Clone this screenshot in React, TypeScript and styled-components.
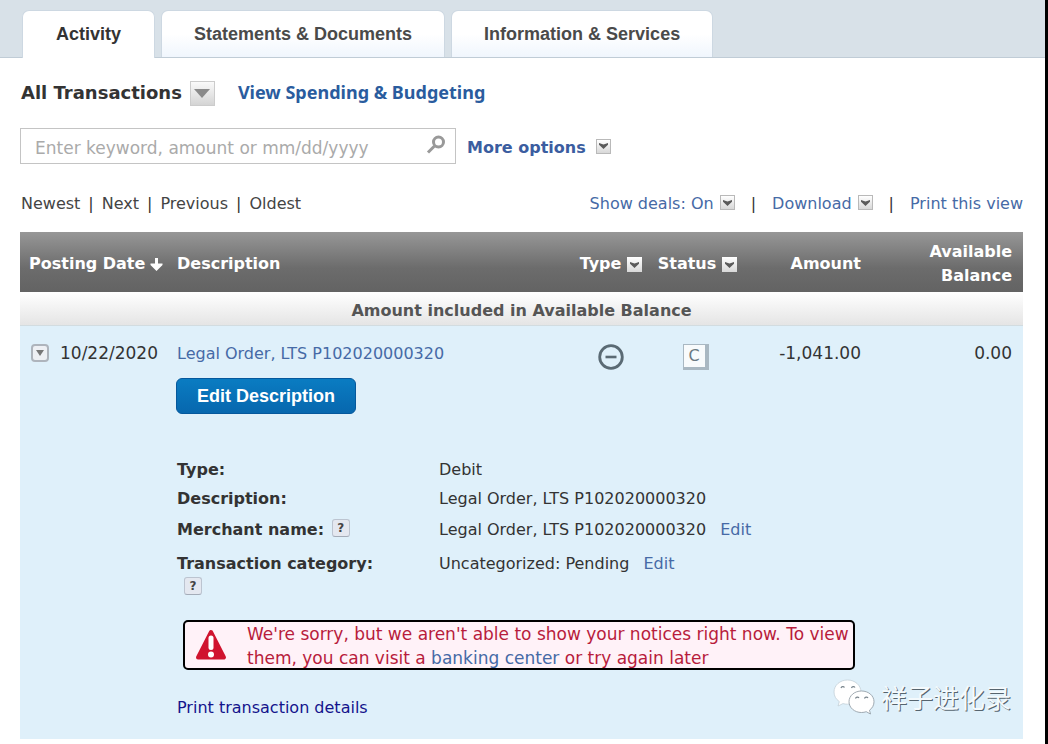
import React from "react";
import styled, { createGlobalStyle } from "styled-components";

const GlobalStyle = createGlobalStyle`
  *, *::before, *::after { box-sizing: border-box; }
  body {
    margin: 0;
    background: #fff;
    color: #333;
    font-family: "DejaVu Sans", Verdana, sans-serif;
    font-size: 16px;
    line-height: 24px;
  }
  a { color: #466aa6; text-decoration: none; }
  button, input { font: inherit; }
`;

const Page = styled.div`
  min-height: 100vh;
  border-right: 3px solid #000;
`;

const TabBar = styled.nav`
  display: flex;
  align-items: flex-end;
  gap: 6px;
  height: 58px;
  padding-left: 22px;
  background: #d8e1e8;
  border-bottom: 1px solid #c0ccd6;
`;

const Tab = styled.a<{ $active?: boolean }>`
  height: ${(p) => (p.$active ? 48 : 47)}px;
  margin-bottom: ${(p) => (p.$active ? -1 : 0)}px;
  padding: 0 ${(p) => (p.$active ? 33 : 32)}px;
  border: 1px solid #cdd8e2;
  border-bottom: 0;
  border-radius: 7px 7px 0 0;
  background: ${(p) => (p.$active ? "#fff" : "linear-gradient(#fff 50%, #f0f6fd)")};
  color: ${(p) => (p.$active ? "#333" : "#4a4a4a")};
  font: bold 18px/46px "Liberation Sans", Arial, sans-serif;
  white-space: nowrap;
`;

const Main = styled.main`
  padding: 22px 22px 5px 20px;
`;

const TitleRow = styled.div`
  display: flex;
  align-items: center;
  height: 26px;
  padding-left: 1px;
`;

const Title = styled.h1`
  margin: 0 8px 0 0;
  font-size: 18px;
  line-height: 24px;
`;

const BigDrop = styled.button`
  display: flex;
  align-items: center;
  justify-content: center;
  width: 25px;
  height: 25px;
  padding: 0;
  border: 1px solid #ccc;
  background: linear-gradient(#fafafa, #d4d4d4);
`;

const BudgetLink = styled.a`
  margin-left: 23px;
  padding-bottom: 2px;
  color: #2a5c9e;
  font: bold 18px/24px "Noto Sans", sans-serif;
`;

const SearchRow = styled.form`
  display: flex;
  align-items: center;
  gap: 11px;
  margin-top: 22px;
`;

const SearchBox = styled.div`
  display: flex;
  align-items: center;
  width: 436px;
  height: 36px;
  padding: 0 9px 0 14px;
  border: 1px solid #c4c4c4;
`;

const SearchInput = styled.input`
  flex: 1;
  min-width: 0;
  padding: 4px 0 0;
  border: 0;
  outline: 0;
  background: none;
  color: #333;
  font-size: 17px;
  &::placeholder { color: #aaa; opacity: 1; }
`;

const IconButton = styled.button`
  display: flex;
  padding: 0 0 2px;
  border: 0;
  background: none;
`;

const MoreOptions = styled.a`
  display: flex;
  align-items: center;
  gap: 10px;
  padding-top: 3px;
  color: #3b5da0;
  font-weight: bold;
`;

const ControlRow = styled.div`
  display: flex;
  justify-content: space-between;
  margin: 28px 0 16px;
  padding: 0 0 0 1px;
`;

const Pager = styled.nav`
  display: flex;
  gap: 8px;
  a { color: #444; }
`;

const Tools = styled.div`
  display: flex;
  gap: 16px;
  a { display: flex; align-items: center; gap: 6px; }
`;

const SmallDrop = styled.span`
  display: inline-flex;
  align-items: center;
  justify-content: center;
  width: 15px;
  height: 15px;
  margin-bottom: 3px;
  border: 1px solid #b9b9b9;
  background: linear-gradient(#fff, #d8d8d8);
`;

const HeaderDrop = styled.button`
  display: inline-flex;
  align-items: center;
  justify-content: center;
  width: 15px;
  height: 15px;
  margin-left: 6px;
  padding: 0;
  border: 0;
  background: linear-gradient(#fff, #d8d8d8);
  vertical-align: 1px;
`;

const TableArea = styled.div`
  position: relative;
`;

const Table = styled.table`
  width: 100%;
  border-collapse: collapse;
  table-layout: fixed;
`;

const Col = styled.col<{ $w?: number }>`
  width: ${(p) => (p.$w ? `${p.$w}px` : "auto")};
`;

const HeadRow = styled.tr`
  height: 60px;
  background: linear-gradient(#979797, #6c6c6c 60%, #636363);
  color: #fff;
`;

const Th = styled.th<{ $align?: string; $gutter?: boolean }>`
  padding: 3px ${(p) => (p.$align === "right" ? 11 : 0)}px 0 ${(p) => (p.$gutter ? 9 : 0)}px;
  text-align: ${(p) => p.$align || "left"};
  white-space: ${(p) => (p.$align === "right" ? "normal" : "nowrap")};
`;

const GroupRow = styled.tr`
  height: 34px;
  background: linear-gradient(#fff, #e4e4e4);
  box-shadow: inset 0 -1px #d2dce0;
  th { padding: 3px 0 0; color: #555; }
`;

const EntryRow = styled.tr`
  background: #dff0fa;
`;

const Td = styled.td<{ $align?: string; $top?: number; $large?: boolean }>`
  padding: ${(p) => p.$top ?? 15}px ${(p) => (p.$align === "right" ? 11 : 0)}px 0 0;
  font-size: ${(p) => (p.$large ? 17 : 16)}px;
  text-align: ${(p) => p.$align || "left"};
  vertical-align: top;
`;

const DateCell = styled.div`
  display: flex;
  align-items: center;
  gap: 11px;
  padding-left: 11px;
`;

const Expander = styled.button`
  display: flex;
  align-items: center;
  justify-content: center;
  width: 18px;
  height: 18px;
  padding: 0;
  border: 2px solid #aeb4bc;
  border-radius: 4px;
  background: #eef0f4;
`;

const EditButton = styled.button`
  display: block;
  height: 36px;
  margin: 12px 0 0 -1px;
  padding: 0 20px;
  border: 1px solid #05589c;
  border-radius: 6px;
  background: linear-gradient(#0a7cc2, #0767ae);
  color: #fff;
  font: bold 18px/34px "Liberation Sans", Arial, sans-serif;
  white-space: nowrap;
`;

const StatusBadge = styled.span`
  display: inline-block;
  width: 26px;
  height: 26px;
  margin-right: 4px;
  border: solid #a9b8c2;
  border-width: 1px 4px 3px 1px;
  background: #f8fbfc;
  color: #6a7a82;
  font: 16px/22px "DejaVu Sans", sans-serif;
  text-align: center;
`;

const DetailCell = styled.td`
  height: 325px;
  padding: 44px 0 0;
  vertical-align: top;
`;

const Details = styled.dl`
  display: grid;
  grid-template-columns: 234px 1fr;
  column-gap: 28px;
  margin: 0;
  dt { font-weight: bold; }
  dd { margin: 0; }
  dd a { margin-left: 9px; }
  dt, dd { padding-bottom: 5px; }
  dt:nth-of-type(n + 3), dd:nth-of-type(n + 3) { padding: 2px 0 8px; }
  dt:last-of-type { padding-bottom: 0; }
`;

const Help = styled.button`
  width: 18px;
  height: 18px;
  margin: 0 2px;
  padding: 0;
  border: 1px solid #bcc4d0;
  border-bottom-color: #a4acb8;
  border-radius: 3px;
  background: #e4e8f0;
  color: #444;
  font: bold 12px/14px "DejaVu Sans", sans-serif;
  vertical-align: 3px;
`;

const HelpBelow = styled.div`
  padding-left: 5px;
`;

const Notice = styled.div`
  display: flex;
  align-items: center;
  gap: 20px;
  max-width: 672px;
  height: 50px;
  margin: 20px 0 0 6px;
  padding-left: 10px;
  border: 2px solid #000;
  border-radius: 5px;
  background: #fff2f8;
  color: #b81c3c;
  font-size: 17px;
`;

const NoticeText = styled.p`
  flex: 1;
  margin: 0;
  padding-top: 2px;
`;

const PrintLink = styled.a`
  display: inline-block;
  margin-top: 26px;
  color: #14148c;
`;

const Watermark = styled.div`
  position: absolute;
  right: 12px;
  bottom: 22px;
  display: flex;
  align-items: center;
  gap: 6px;
  color: #f4fafd;
  font: 26px/40px "Noto Sans CJK SC", sans-serif;
  text-shadow: 1px 1px 0 #56646e;
`;

const Arrow = ({ w = 9, h = 6, color = "#666" }: { w?: number; h?: number; color?: string }) => (
  <svg width={w} height={h} viewBox="0 0 10 6" preserveAspectRatio="none" aria-hidden="true">
    <path d="M0 0H10L5 6Z" fill={color} />
  </svg>
);

const Chevron = () => (
  <svg width="9" height="6" viewBox="0 0 9 6" aria-hidden="true">
    <path d="M0 0L4.5 1.6L9 0V1.8L4.5 6L0 1.8Z" fill="#5a5a5a" />
  </svg>
);

const SearchIcon = () => (
  <svg width="20" height="20" viewBox="0 0 20 20" fill="none" stroke="#999" aria-hidden="true">
    <circle cx="12.5" cy="7" r="5" strokeWidth="3" />
    <path d="M8.5 11L2 17.5" strokeWidth="3" />
  </svg>
);

const SortIcon = () => (
  <svg width="13" height="14" viewBox="0 0 13 14" fill="#fff" aria-hidden="true">
    <path d="M5 1H8V6.500H12.500V8L6.500 14L0.500 8V6.500H5Z" />
  </svg>
);

const SortLabel = styled.span`
  display: inline-flex;
  align-items: center;
  gap: 5px;
`;

const MinusIcon = () => (
  <svg width="26" height="26" viewBox="0 0 26 26" fill="none" stroke="#5a6a74" role="img" aria-label="Debit">
    <circle cx="13" cy="13" r="11.3" strokeWidth="2.8" />
    <path d="M7.5 13H18.5" strokeWidth="2.6" />
  </svg>
);

const WarningIcon = () => (
  <svg width="32" height="32" viewBox="0 0 32 32" role="img" aria-label="Warning">
    <path d="M16 3L29 28.500H3Z" fill="#d0142f" stroke="#d0142f" strokeWidth="4" strokeLinejoin="round" />
    <path d="M16 9V18.500" stroke="#fff" strokeWidth="5" strokeLinecap="round" />
    <circle cx="16" cy="25.500" r="3" fill="#fff" />
  </svg>
);

const ChatIcon = () => (
  <svg width="42" height="36" viewBox="0 0 42 36" fill="#fff" stroke="#8a969e" strokeWidth="0.8" aria-hidden="true">
    <path d="M14.500 1C7 1 1 6.300 1 13C1 17 3 20.300 6.300 22.600L5 27L10 24.600C11.500 25 13 25.200 14.500 25.200C22 25.200 28 19.700 28 13C28 6.300 22 1 14.500 1Z" stroke="#c4d0d8" />
    <path d="M28.500 12C21.500 12 16 16.700 16 22.700C16 28.700 21.500 33.500 28.500 33.500C30.200 33.500 31.800 33.200 33.200 32.700L37.500 35L36.500 31.200C39.300 29.200 41 26.200 41 22.700C41 16.700 35.500 12 28.500 12Z" />
    <g fill="none" stroke="#78848c" strokeWidth="1.2">
      <path d="M8 9A2 2 0 0 1 11.500 8.500M18.500 9A2 2 0 0 1 22 8.500" />
      <path d="M22.500 19.500A2 2 0 0 1 26 19M31.500 19.500A2 2 0 0 1 35 19" />
    </g>
  </svg>
);

export default function App() {
  return (
    <>
      <GlobalStyle />
      <Page>
        <TabBar aria-label="Account sections">
          <Tab href="#activity" $active>Activity</Tab>
          <Tab href="#statements">Statements &amp; Documents</Tab>
          <Tab href="#services">Information &amp; Services</Tab>
        </TabBar>
        <Main>
          <TitleRow>
            <Title>All Transactions</Title>
            <BigDrop type="button" aria-label="Choose transactions">
              <Arrow w={16} h={9} color="#8a8a8a" />
            </BigDrop>
            <BudgetLink href="#budget">View Spending &amp; Budgeting</BudgetLink>
          </TitleRow>
          <SearchRow>
            <SearchBox>
              <SearchInput type="text" aria-label="Search transactions" placeholder="Enter keyword, amount or mm/dd/yyyy" />
              <IconButton type="button" aria-label="Search"><SearchIcon /></IconButton>
            </SearchBox>
            <MoreOptions href="#more">More options <SmallDrop><Chevron /></SmallDrop></MoreOptions>
          </SearchRow>
          <ControlRow>
            <Pager aria-label="Transaction pages">
              <a href="#newest">Newest</a><span>|</span>
              <a href="#next">Next</a><span>|</span>
              <a href="#previous">Previous</a><span>|</span>
              <a href="#oldest">Oldest</a>
            </Pager>
            <Tools>
              <a href="#deals">Show deals: On <SmallDrop><Chevron /></SmallDrop></a><span>|</span>
              <a href="#download">Download <SmallDrop><Chevron /></SmallDrop></a><span>|</span>
              <a href="#print">Print this view</a>
            </Tools>
          </ControlRow>
          <TableArea>
            <Table>
              <colgroup>
                <Col $w={157} />
                <Col />
                <Col $w={80} />
                <Col $w={93} />
                <Col $w={128} />
                <Col $w={151} />
              </colgroup>
              <thead>
                <HeadRow>
                  <Th $gutter><SortLabel>Posting Date<SortIcon /></SortLabel></Th>
                  <Th>Description</Th>
                  <Th $align="center">Type<HeaderDrop type="button" aria-label="Filter by type"><Chevron /></HeaderDrop></Th>
                  <Th $align="center">Status<HeaderDrop type="button" aria-label="Filter by status"><Chevron /></HeaderDrop></Th>
                  <Th $align="right">Amount</Th>
                  <Th $align="right">Available Balance</Th>
                </HeadRow>
              </thead>
              <tbody>
                <GroupRow>
                  <th colSpan={6}>Amount included in Available Balance</th>
                </GroupRow>
                <EntryRow>
                  <Td $large>
                    <DateCell>
                      <Expander type="button" aria-label="Hide details"><Arrow w={8} h={6} color="#777" /></Expander>
                      10/22/2020
                    </DateCell>
                  </Td>
                  <Td $top={16}>
                    <a href="#order">Legal Order, LTS P102020000320</a>
                    <EditButton type="button">Edit Description</EditButton>
                  </Td>
                  <Td $align="center" $top={18}><MinusIcon /></Td>
                  <Td $align="center" $top={18}><StatusBadge>C</StatusBadge></Td>
                  <Td $align="right" $large>-1,041.00</Td>
                  <Td $align="right" $large>0.00</Td>
                </EntryRow>
                <EntryRow>
                  <td />
                  <DetailCell colSpan={5}>
                    <Details>
                      <dt>Type:</dt>
                      <dd>Debit</dd>
                      <dt>Description:</dt>
                      <dd>Legal Order, LTS P102020000320</dd>
                      <dt>Merchant name: <Help type="button" aria-label="About merchant name">?</Help></dt>
                      <dd>Legal Order, LTS P102020000320 <a href="#merchant">Edit</a></dd>
                      <dt>
                        Transaction category:
                        <HelpBelow><Help type="button" aria-label="About transaction category">?</Help></HelpBelow>
                      </dt>
                      <dd>Uncategorized: Pending <a href="#category">Edit</a></dd>
                    </Details>
                    <Notice role="alert">
                      <WarningIcon />
                      <NoticeText>
                        We're sorry, but we aren't able to show your notices right now. To view them, you can visit a{" "}
                        <a href="#center">banking center</a> or try again later
                      </NoticeText>
                    </Notice>
                    <PrintLink href="#print-details">Print transaction details</PrintLink>
                  </DetailCell>
                </EntryRow>
              </tbody>
            </Table>
            <Watermark><ChatIcon />祥子进化录</Watermark>
          </TableArea>
        </Main>
      </Page>
    </>
  );
}
